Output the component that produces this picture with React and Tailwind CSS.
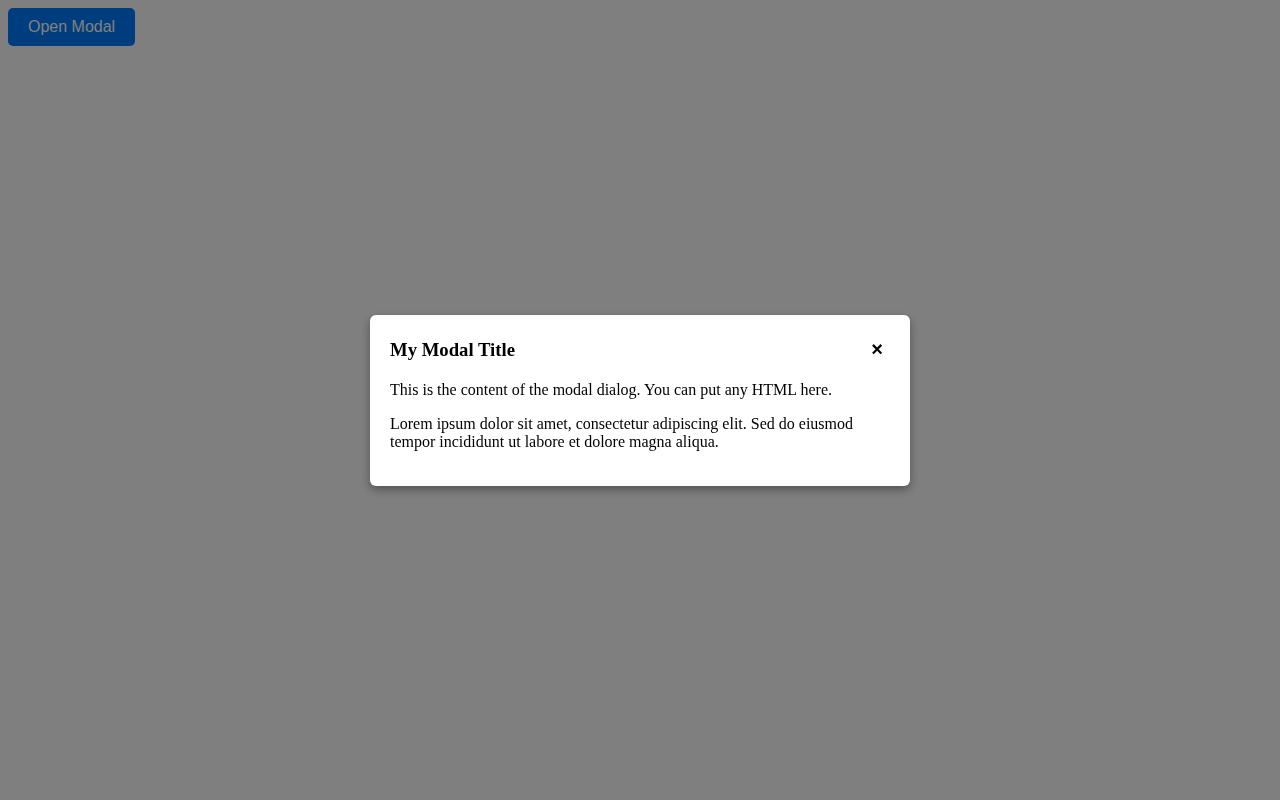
import { useState } from 'react'

export default function App() {
  const [open, setOpen] = useState(true)

  return (
    <div className="min-h-screen bg-white" style={{ fontFamily: '"Liberation Serif", "Times New Roman", serif' }}>
      <div className="p-2">
        <button
          onClick={() => setOpen(true)}
          className="px-5 py-2.5 bg-[#007bff] text-white rounded-[5px] text-base leading-[18px] font-['Liberation_Sans',Arial,sans-serif]"
        >
          Open Modal
        </button>
      </div>

      {open && (
        <div className="fixed inset-0 bg-black/50 flex items-center justify-center">
          <div className="w-[540px] bg-white rounded-md px-5 pt-[21px] pb-[19px] shadow-[0_4px_10px_rgba(0,0,0,0.35)] text-black">
            <div className="flex items-center justify-between h-[29px]">
              <h3 className="text-[18.72px] font-bold leading-[22px]">My Modal Title</h3>
              <button
                onClick={() => setOpen(false)}
                className="text-xl font-bold leading-[26px] pb-[2px] pl-[9px] pr-[7px] font-['Liberation_Sans',Arial,sans-serif]"
              >
                ×
              </button>
            </div>
            <p className="mt-4 text-base leading-[18px]">
              This is the content of the modal dialog. You can put any HTML here.
            </p>
            <p className="my-4 text-base leading-[18px]">
              Lorem ipsum dolor sit amet, consectetur adipiscing elit. Sed do eiusmod tempor incididunt ut labore et dolore magna aliqua.
            </p>
          </div>
        </div>
      )}
    </div>
  )
}
